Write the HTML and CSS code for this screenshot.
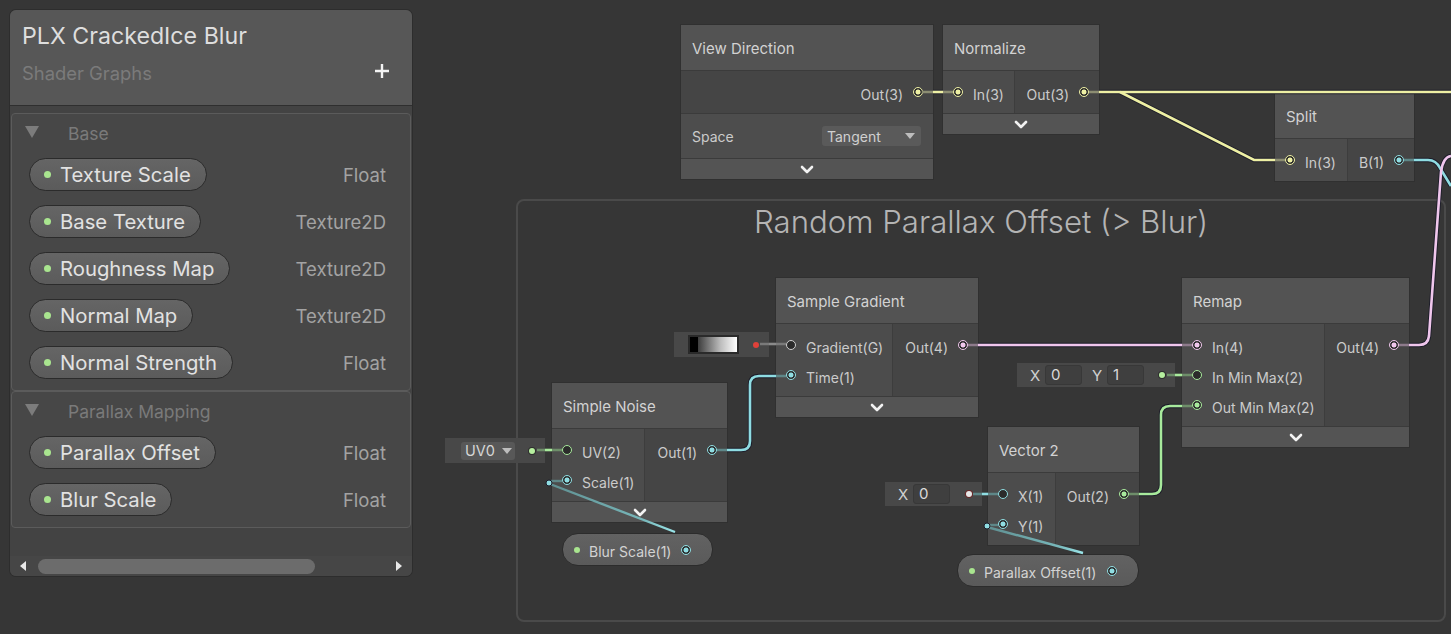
FILE: index.html
```html
<!DOCTYPE html>
<html lang="en">
<head>
<meta charset="utf-8">
<title>Shader Graph</title>
<link rel="stylesheet" href="styles.css">
</head>
<body>
<div class="app">
  <div class="graph">
    <div class="group"><div class="group-title">Random Parallax Offset (&gt; Blur)</div></div>

    <div class="node n-viewdir">
      <div class="node-title">View Direction</div>
      <div class="node-ports">
        <div class="outputs">
          <div class="port out"><span>Out(3)</span><i class="dot v3 on"></i></div>
        </div>
      </div>
      <div class="node-control">
        <span>Space</span>
        <div class="dropdown"><span>Tangent</span><i class="caret"></i></div>
      </div>
      <div class="node-foot"><svg class="chev" viewBox="0 0 14 9"><polyline points="2,2 7,7 12,2"/></svg></div>
    </div>

    <div class="node n-normalize">
      <div class="node-title">Normalize</div>
      <div class="node-ports">
        <div class="inputs">
          <div class="port in"><i class="dot v3 on"></i><span>In(3)</span></div>
        </div>
        <div class="outputs">
          <div class="port out"><span>Out(3)</span><i class="dot v3 on"></i></div>
        </div>
      </div>
      <div class="node-foot"><svg class="chev" viewBox="0 0 14 9"><polyline points="2,2 7,7 12,2"/></svg></div>
    </div>

    <div class="node n-split">
      <div class="node-title">Split</div>
      <div class="node-ports last">
        <div class="inputs">
          <div class="port in"><i class="dot v3 on"></i><span>In(3)</span></div>
        </div>
        <div class="outputs">
          <div class="port out"><span>B(1)</span><i class="dot v1 on"></i></div>
        </div>
      </div>
    </div>

    <div class="node n-sgrad">
      <div class="node-title">Sample Gradient</div>
      <div class="node-ports">
        <div class="inputs">
          <div class="port in"><i class="dot vg"></i><span>Gradient(G)</span></div>
          <div class="port in"><i class="dot v1 on"></i><span>Time(1)</span></div>
        </div>
        <div class="outputs">
          <div class="port out"><span>Out(4)</span><i class="dot v4 on"></i></div>
        </div>
      </div>
      <div class="node-foot"><svg class="chev" viewBox="0 0 14 9"><polyline points="2,2 7,7 12,2"/></svg></div>
    </div>

    <div class="node n-noise">
      <div class="node-title">Simple Noise</div>
      <div class="node-ports">
        <div class="inputs">
          <div class="port in"><i class="dot v2"></i><span>UV(2)</span></div>
          <div class="port in"><i class="dot v1 on"></i><span>Scale(1)</span></div>
        </div>
        <div class="outputs">
          <div class="port out"><span>Out(1)</span><i class="dot v1 on"></i></div>
        </div>
      </div>
      <div class="node-foot"><svg class="chev" viewBox="0 0 14 9"><polyline points="2,2 7,7 12,2"/></svg></div>
    </div>

    <div class="node n-remap">
      <div class="node-title">Remap</div>
      <div class="node-ports">
        <div class="inputs">
          <div class="port in"><i class="dot v4 on"></i><span>In(4)</span></div>
          <div class="port in"><i class="dot v2"></i><span>In Min Max(2)</span></div>
          <div class="port in"><i class="dot v2 on"></i><span>Out Min Max(2)</span></div>
        </div>
        <div class="outputs">
          <div class="port out"><span>Out(4)</span><i class="dot v4 on"></i></div>
        </div>
      </div>
      <div class="node-foot"><svg class="chev" viewBox="0 0 14 9"><polyline points="2,2 7,7 12,2"/></svg></div>
    </div>

    <div class="node n-vec2">
      <div class="node-title">Vector 2</div>
      <div class="node-ports last">
        <div class="inputs">
          <div class="port in"><i class="dot v1"></i><span>X(1)</span></div>
          <div class="port in"><i class="dot v1 on"></i><span>Y(1)</span></div>
        </div>
        <div class="outputs">
          <div class="port out"><span>Out(2)</span><i class="dot v2 on"></i></div>
        </div>
      </div>
    </div>

    <div class="field f-uv">
      <div class="fdrop"><span>UV0</span><i class="caret"></i></div>
      <i class="fdot fd-green"></i>
    </div>
    <div class="field f-grad">
      <div class="swatch"></div>
      <i class="fdot fd-red"></i>
    </div>
    <div class="field f-xy">
      <span class="flabel">X</span><span class="fbox">0</span>
      <span class="flabel">Y</span><span class="fbox">1</span>
      <i class="fdot fd-green"></i>
    </div>
    <div class="field f-x">
      <span class="flabel">X</span><span class="fbox">0</span>
      <i class="fdot fd-white"></i>
    </div>

    <div class="gpill gp-blur"><i class="gdot"></i><span>Blur Scale(1)</span><i class="dot v1 on"></i></div>
    <div class="gpill gp-plx"><i class="gdot"></i><span>Parallax Offset(1)</span><i class="dot v1 on"></i></div>

    <svg class="wires" width="1451" height="634" viewBox="0 0 1451 634">
      <defs>
        <path id="w-vd" d="M933 92H943"/>
        <path id="w-top" d="M1099 92H1451"/>
        <path id="w-br" d="M1120 92L1254 160H1275"/>
        <path id="w-b" d="M1414 160H1428Q1436 160 1440 168L1451 186"/>
        <path id="w-rm" d="M1409 345H1419Q1428 345 1429 336L1441 172Q1443 157 1451 156"/>
        <path id="w-sg" d="M978 345H1182"/>
        <path id="w-sn" d="M727 450H741Q750 450 750 441V385Q750 376 759 376H776"/>
        <path id="w-v2" d="M1139 494H1152Q1161 494 1161 485V415Q1161 406 1170 406H1182"/>
        <path id="w-uv" d="M545 450H552"/>
        <path id="w-gr" d="M769 344H776"/>
        <path id="w-mm" d="M1175 375H1182"/>
        <path id="w-x" d="M982 494H988"/>
        <linearGradient id="g-diag" x1="0" y1="0" x2="1" y2="0">
          <stop offset="0" stop-color="#5f8f91"/>
          <stop offset="0.75" stop-color="#78b8bb"/>
          <stop offset="1" stop-color="#9ae6ea"/>
        </linearGradient>
      </defs>
      <g class="ol">
        <use href="#w-vd"/><use href="#w-top"/><use href="#w-br"/><use href="#w-b"/>
        <use href="#w-rm"/><use href="#w-sg"/><use href="#w-sn"/><use href="#w-v2"/>
      </g>
      <g class="wc">
        <use href="#w-vd" class="c-y"/><use href="#w-top" class="c-y"/><use href="#w-br" class="c-y"/>
        <use href="#w-b" class="c-c"/><use href="#w-rm" class="c-p"/><use href="#w-sg" class="c-p"/>
        <use href="#w-sn" class="c-c"/><use href="#w-v2" class="c-g"/>
        <use href="#w-uv" class="c-g"/><use href="#w-gr" class="c-gr"/><use href="#w-mm" class="c-g"/><use href="#w-x" class="c-c"/>
      </g>
      <g class="stub">
        <path class="s-y" d="M922 92H933M943 92H953M1089 92H1099M1275 160H1285"/>
        <path class="s-c" d="M1404 160H1414M717 450H727M776 376H786M988 494H998"/>
        <path class="s-p" d="M1399 345H1409M968 345H978M1182 345H1192"/>
        <path class="s-g" d="M1129 494H1139M1182 406H1192M1182 375H1192M552 450H562M1167 375H1175M537 450H545"/>
        <path class="s-gr" d="M776 344H786M760 344H769"/>
        <path class="s-c" d="M973 494H982"/>
      </g>
      <g class="diag">
        <path class="d-dim" d="M562 481H551"/>
        <path class="d-main" d="M550 484L675 532"/>
        <circle class="d-end" cx="549" cy="483" r="3"/>
        <path class="d-dim" d="M998 525H988"/>
        <path class="d-main" d="M987 527L1083 553"/>
        <circle class="d-end" cx="987" cy="526" r="3"/>
      </g>
    </svg>
  </div>

  <aside class="bb">
    <header class="bb-head">
      <div class="bb-title">PLX CrackedIce Blur</div>
      <div class="bb-sub">
        <span>Shader Graphs</span>
        <svg class="plus" viewBox="0 0 16 16"><path d="M8 1V15M1 8H15"/></svg>
      </div>
    </header>
    <div class="bb-body">
      <section class="sec">
        <div class="sec-head"><svg class="tri" viewBox="0 0 14 12"><path d="M0 0H14L7 12Z"/></svg><span>Base</span></div>
        <div class="prop"><div class="pill"><i class="gdot"></i><span>Texture Scale</span></div><span class="ptype">Float</span></div>
        <div class="prop"><div class="pill"><i class="gdot"></i><span>Base Texture</span></div><span class="ptype">Texture2D</span></div>
        <div class="prop"><div class="pill"><i class="gdot"></i><span>Roughness Map</span></div><span class="ptype">Texture2D</span></div>
        <div class="prop"><div class="pill"><i class="gdot"></i><span>Normal Map</span></div><span class="ptype">Texture2D</span></div>
        <div class="prop"><div class="pill"><i class="gdot"></i><span>Normal Strength</span></div><span class="ptype">Float</span></div>
      </section>
      <section class="sec">
        <div class="sec-head"><svg class="tri" viewBox="0 0 14 12"><path d="M0 0H14L7 12Z"/></svg><span>Parallax Mapping</span></div>
        <div class="prop"><div class="pill"><i class="gdot"></i><span>Parallax Offset</span></div><span class="ptype">Float</span></div>
        <div class="prop"><div class="pill"><i class="gdot"></i><span>Blur Scale</span></div><span class="ptype">Float</span></div>
      </section>
    </div>
    <div class="bb-scroll">
      <svg class="arrow" viewBox="0 0 6 10"><path d="M6 0V10L0 5Z"/></svg>
      <div class="track"><div class="thumb"></div></div>
      <svg class="arrow" viewBox="0 0 6 10"><path d="M0 0V10L6 5Z"/></svg>
    </div>
  </aside>
</div>
</body>
</html>
```

FILE: styles.css
```css
* { box-sizing: border-box; }
html, body { margin: 0; padding: 0; }
body {
  background: #363636;
  font-family: Inter, "Noto Sans", "Liberation Sans", sans-serif;
  overflow: hidden;
}
.app {
  position: relative;
  width: 1451px;
  height: 634px;
  padding: 10px;
}
.graph { position: absolute; inset: 0; }

/* group */
.group {
  position: absolute;
  left: 516px; top: 199px;
  width: 930px; height: 423px;
  border: 2px solid #4a4a4a;
  border-radius: 8px;
}
.group-title {
  text-align: center;
  font-size: 31.2px;
  line-height: 36px;
  margin-top: 3px;
  font-weight: 300;
  color: #b4b4b4;
}

/* nodes */
.node {
  position: absolute;
  background: #464646;
  box-shadow: 0 0 0 1px #303030;
}
.n-viewdir { left: 681px; top: 25px; width: 252px; }
.n-normalize { left: 943px; top: 25px; width: 156px; }
.n-split { left: 1275px; top: 93px; width: 139px; }
.n-sgrad { left: 776px; top: 278px; width: 202px; }
.n-noise { left: 552px; top: 383px; width: 175px; }
.n-remap { left: 1182px; top: 278px; width: 227px; }
.n-vec2 { left: 988px; top: 427px; width: 151px; }

.node-title {
  height: 46px;
  background: #535353;
  border-bottom: 1px solid #3b3b3b;
  display: flex;
  align-items: center;
  padding-left: 11px;
  padding-top: 2px;
  font-size: 15px;
  color: #d2d2d2;
}
.node-ports { display: flex; border-bottom: 1px solid #3b3b3b; }
.node-ports.last { border-bottom: none; }
.inputs {
  background: #4c4c4c;
  border-right: 1px solid #3d3d3d;
  padding: 6px 0;
}
.outputs { flex: 1; background: #454545; padding: 6px 0; }
.n-normalize .inputs { width: 72px; }
.n-split .inputs { width: 73px; }
.n-sgrad .inputs { width: 117px; }
.n-noise .inputs { width: 93px; }
.n-remap .inputs { width: 143px; }
.n-vec2 .inputs { width: 68px; }

.port {
  height: 30px;
  display: flex;
  align-items: center;
  gap: 10px;
  font-size: 14px;
  color: #cbcbcb;
  white-space: nowrap;
}
.port span { margin-top: 5px; }
.port.in { padding-left: 10px; }
.port.out { justify-content: flex-end; padding-right: 10px; }

.dot {
  display: block;
  flex: none;
  width: 10px; height: 10px;
  border-radius: 50%;
  border: 1.5px solid var(--c);
  background: #2b2b2b;
}
.dot.on { background: radial-gradient(circle, var(--c) 0 2.2px, #2b2b2b 2.8px); }
.v1 { --c: #8fdde2; }
.v2 { --c: #a8ea9c; }
.v3 { --c: #eef0a4; }
.v4 { --c: #f0c6ec; }
.vg { --c: #cfcfcf; }

.node-control {
  height: 45px;
  background: #4d4d4d;
  border-bottom: 1px solid #3b3b3b;
  display: flex;
  align-items: center;
  justify-content: space-between;
  padding: 0 12px 0 11px;
  font-size: 14px;
  color: #cbcbcb;
}
.dropdown {
  width: 99px; height: 20px;
  background: #5a5a5a;
  border-radius: 3px;
  display: flex;
  align-items: center;
  justify-content: space-between;
  padding: 0 6px 0 5px;
  font-size: 14px;
  color: #d0d0d0;
}
.caret {
  display: block;
  width: 0; height: 0;
  border-left: 5px solid transparent;
  border-right: 5px solid transparent;
  border-top: 6px solid #bdbdbd;
}
.node-foot {
  height: 20px;
  background: #545454;
  display: flex;
  align-items: center;
  justify-content: center;
}
.chev { width: 14px; height: 9px; }
.chev polyline { fill: none; stroke: #f2f2f2; stroke-width: 2.6; stroke-linecap: round; stroke-linejoin: round; }

/* inline fields */
.field {
  position: absolute;
  background: #484848;
  display: flex;
  align-items: center;
  font-size: 14px;
  color: #cfcfcf;
}
.f-uv { left: 445px; top: 438px; width: 100px; height: 25px; padding-left: 16px; }
.f-grad { left: 674px; top: 332px; width: 95px; height: 25px; padding-left: 14px; }
.f-xy { left: 1017px; top: 363px; width: 158px; height: 24px; padding-left: 11px; }
.f-x { left: 885px; top: 482px; width: 97px; height: 24px; padding-left: 11px; }
.fdrop {
  width: 54px; height: 18px;
  background: #585858;
  border-radius: 3px;
  display: flex;
  align-items: center;
  gap: 7px;
  padding-left: 4px;
  font-size: 14.5px;
  color: #d6d6d6;
}
.swatch {
  width: 51px; height: 19px;
  border: 2px solid #2a2a2a;
  background: linear-gradient(to right, #000 0 16%, #3a3a3a 16%, #bdbdbd 65%, #fff 100%);
}
.flabel { width: 14px; text-align: center; color: #d0d0d0; font-size: 15px; }
.fbox {
  width: 37px; height: 20px;
  margin-left: 3px; margin-right: 8px;
  background: #3f3f3f;
  border: 1px solid #383838;
  border-radius: 3px;
  padding-left: 5px;
  line-height: 18px;
  font-size: 15px;
  color: #dadada;
}
.fdot {
  display: block;
  width: 6px; height: 6px;
  border-radius: 50%;
  margin-left: auto;
  margin-right: 10px;
}
.fd-green { background: #b6ef9f; box-shadow: 0 0 0 1px #2e2e2e; }
.fd-red { background: #e0413a; }
.fd-white { background: #e8e8e8; box-shadow: 0 0 0 1px #6a2a2a; }

/* graph property pills */
.gpill {
  position: absolute;
  height: 33px;
  border-radius: 16px;
  background: linear-gradient(#626262, #5a5a5a);
  border: 1px solid #2c2c2c;
  display: flex;
  align-items: center;
  padding: 0 21px 0 11px;
  font-size: 14px;
  color: #d3d3d3;
}
.gpill span { margin-top: 4px; }
.gp-blur { left: 562px; top: 533px; width: 151px; }
.gp-plx { left: 957px; top: 554px; width: 182px; }
.gpill .gdot { width: 6px; height: 6px; margin-right: 9px; }
.gpill .dot { margin-left: auto; }

/* wires */
.wires { position: absolute; left: 0; top: 0; pointer-events: none; }
.wires use, .wires path { fill: none; }
.ol use { stroke: #1d1d2a; stroke-width: 4.4; }
.wc use { stroke-width: 2.6; }
.c-y { stroke: #eef0a4; }
.c-c { stroke: #8fdde2; }
.c-p { stroke: #f0c6ec; }
.c-g { stroke: #a8ea9c; }
.c-gr { stroke: #8a8a8a; }
.stub path { stroke-width: 2.6; }
.s-y { stroke: #8c8d72; }
.s-c { stroke: #5e8788; }
.s-p { stroke: #8d7a8b; }
.s-g { stroke: #6e8e6a; }
.s-gr { stroke: #7a7a7a; }
.d-dim { stroke: #5e8788; stroke-width: 2.4; }
.diag .d-main { stroke: url(#g-diag); stroke-width: 2.4; }
.d-end { fill: #8fdde2; stroke: #1d1d2a; stroke-width: 1; }

/* blackboard */
.bb {
  position: relative;
  z-index: 10;
  width: 402px;
  background: #434343;
  border-radius: 6px;
  overflow: hidden;
  box-shadow: 0 0 0 1px #2d2d2d;
}
.bb-head {
  height: 96px;
  background: #575757;
  border-bottom: 1px solid #2f2f2f;
  padding: 12px 22px 0 12px;
}
.bb-title { font-size: 23.2px; line-height: 28px; color: #dedede; }
.bb-sub {
  margin-top: 11px;
  height: 24px;
  display: flex;
  align-items: center;
  justify-content: space-between;
  font-size: 18.4px;
  color: #7b7b7b;
}
.plus { width: 16px; height: 16px; margin-top: -4px; }
.plus path { stroke: #f4f4f4; stroke-width: 2.4; fill: none; }
.bb-body { padding: 7px 1px 28px; }
.sec {
  background: #474747;
  border: 1px solid #5b5b5b;
  border-radius: 4px;
  padding-bottom: 4px;
}
.sec-head {
  height: 37px;
  display: flex;
  align-items: center;
  padding-left: 13px;
  padding-top: 2px;
  gap: 29px;
  font-size: 17.5px;
  color: #7a7a7a;
}
.tri { width: 14px; height: 12px; margin-top: -4px; }
.tri path { fill: #7c7c7c; }
.prop {
  height: 47px;
  display: flex;
  align-items: center;
  justify-content: space-between;
  padding: 0 24px 0 17px;
}
.pill {
  height: 33px;
  border-radius: 17px;
  background: linear-gradient(#656565, #5b5b5b);
  border: 1px solid #2b2b2b;
  display: flex;
  align-items: center;
  padding: 0 15px 0 14px;
  gap: 9px;
  font-size: 20.3px;
  color: #e2e2e2;
}
.gdot {
  display: block;
  flex: none;
  width: 7px; height: 7px;
  border-radius: 50%;
  background: #a9e58f;
}
.ptype { font-size: 18.5px; color: #a3a3a3; }
.bb-scroll {
  height: 20px;
  background: #464646;
  display: flex;
  align-items: center;
  padding: 0 10px;
}
.arrow { width: 6px; height: 10px; flex: none; }
.arrow path { fill: #e8e8e8; }
.track { flex: 1; padding: 0 0 0 12px; }
.thumb {
  width: 277px; height: 15px;
  border-radius: 8px;
  background: #6c6c6c;
}
```
